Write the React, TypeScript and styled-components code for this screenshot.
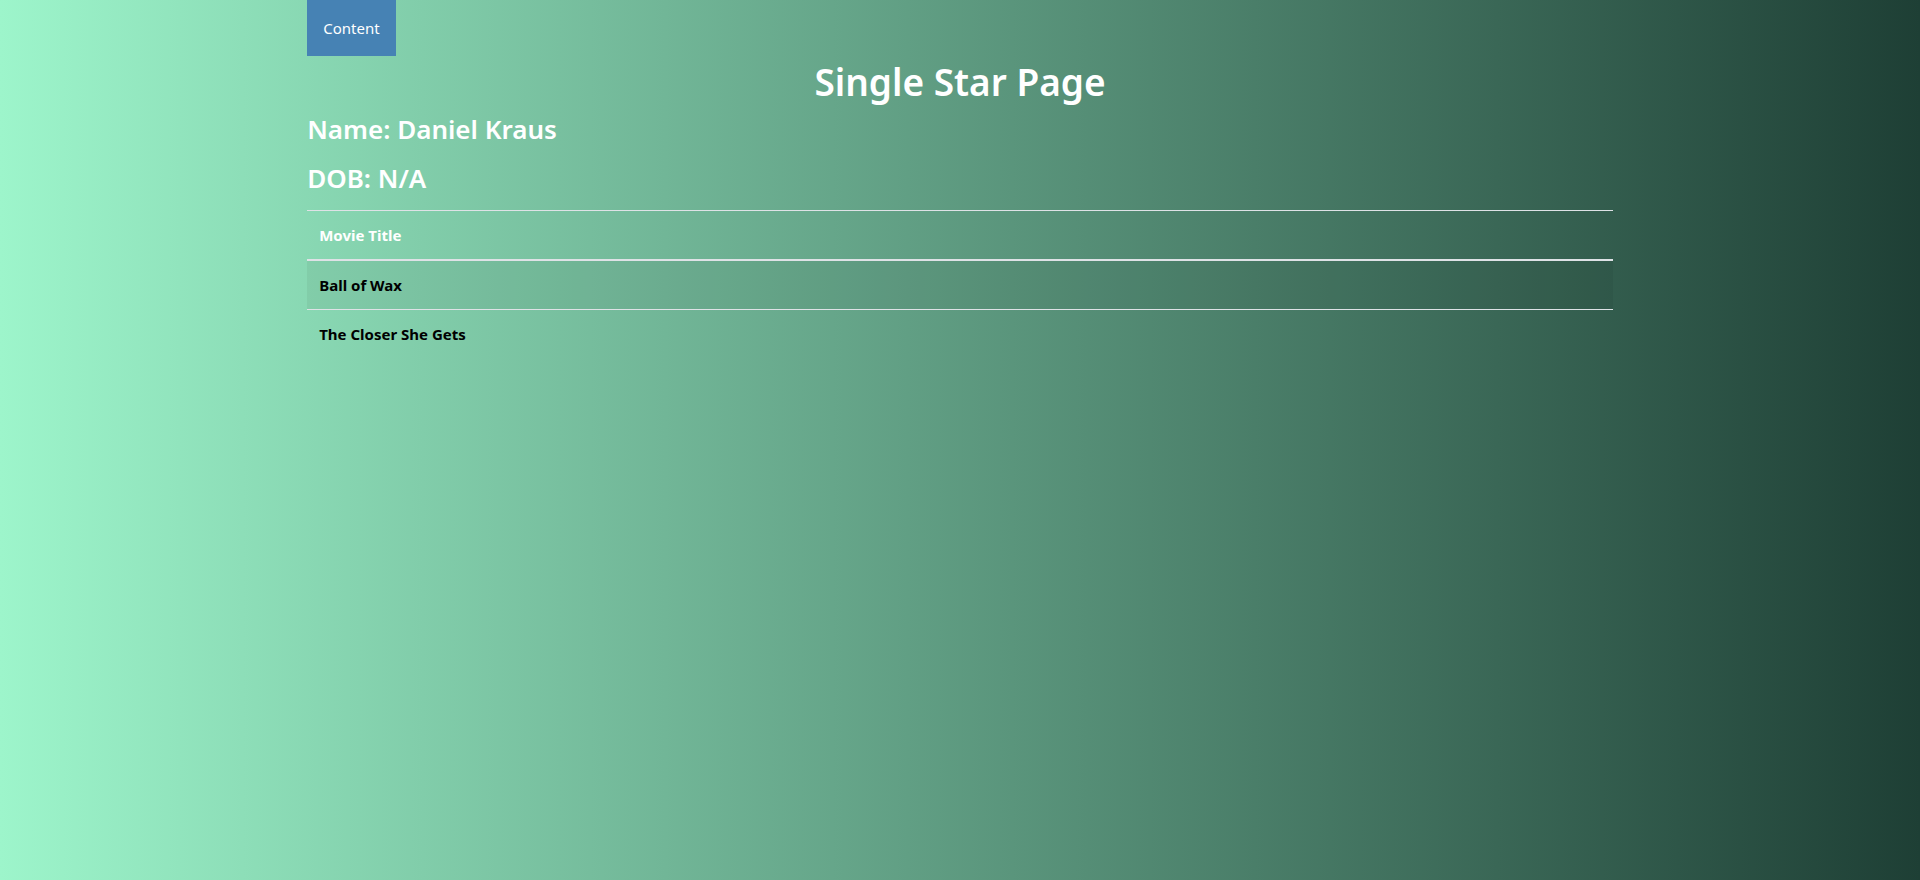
import styled, { createGlobalStyle } from 'styled-components'

const GlobalStyle = createGlobalStyle`
  html, body {
    margin: 0;
    padding: 0;
  }
  body {
    min-height: 100vh;
    background: linear-gradient(to right, #9df5cb, #1e3f35);
    font-family: "Noto Sans", "Open Sans", sans-serif;
    font-size: 16px;
    line-height: 1.5;
    color: #212529;
  }
`

const movies = ['Ball of Wax', 'The Closer She Gets']

const App: React.FC = () => {
  return (
    <>
      <GlobalStyle />
      <Page>
        <Nav>
          <NavButton>Content</NavButton>
        </Nav>
        <Title>Single Star Page</Title>
        <Info>Name: Daniel Kraus</Info>
        <Info>DOB: N/A</Info>
        <Table>
          <thead>
            <tr>
              <Th>Movie Title</Th>
            </tr>
          </thead>
          <tbody>
            {movies.map((m, i) => (
              <Row key={m} $striped={i % 2 === 0}>
                <Td>{m}</Td>
              </Row>
            ))}
          </tbody>
        </Table>
      </Page>
    </>
  )
}

export default App

const Page = styled.div`
  width: 68%;
  margin: 0 auto;
`
const Nav = styled.div`
  display: flex;
`
const NavButton = styled.div`
  background-color: #4682b4;
  color: white;
  height: 56px;
  padding: 0 16px;
  display: flex;
  align-items: center;
  font-size: 15px;
`
const Title = styled.h1`
  margin: 4px 0 8px;
  text-align: center;
  color: white;
  font-size: 37px;
  font-weight: 600;
  line-height: 44px;
`
const Info = styled.h3`
  margin: 0 0 15px;
  color: white;
  font-size: 26px;
  font-weight: 600;
  line-height: 34px;
`
const Table = styled.table`
  width: 100%;
  border-collapse: collapse;
`
const Th = styled.th`
  text-align: left;
  color: white;
  font-size: 15px;
  font-weight: 700;
  line-height: 24px;
  padding: 12px;
  border-top: 1px solid #dee2e6;
  border-bottom: 2px solid #dee2e6;
`
const Row = styled.tr<{ $striped: boolean }>`
  background-color: ${p => (p.$striped ? 'rgba(0, 0, 0, 0.05)' : 'transparent')};
`
const Td = styled.td`
  color: black;
  font-size: 15px;
  font-weight: 700;
  line-height: 24px;
  padding: 12px;
  border-bottom: 1px solid #dee2e6;
  tr:last-child > & {
    border-bottom: none;
  }
`
